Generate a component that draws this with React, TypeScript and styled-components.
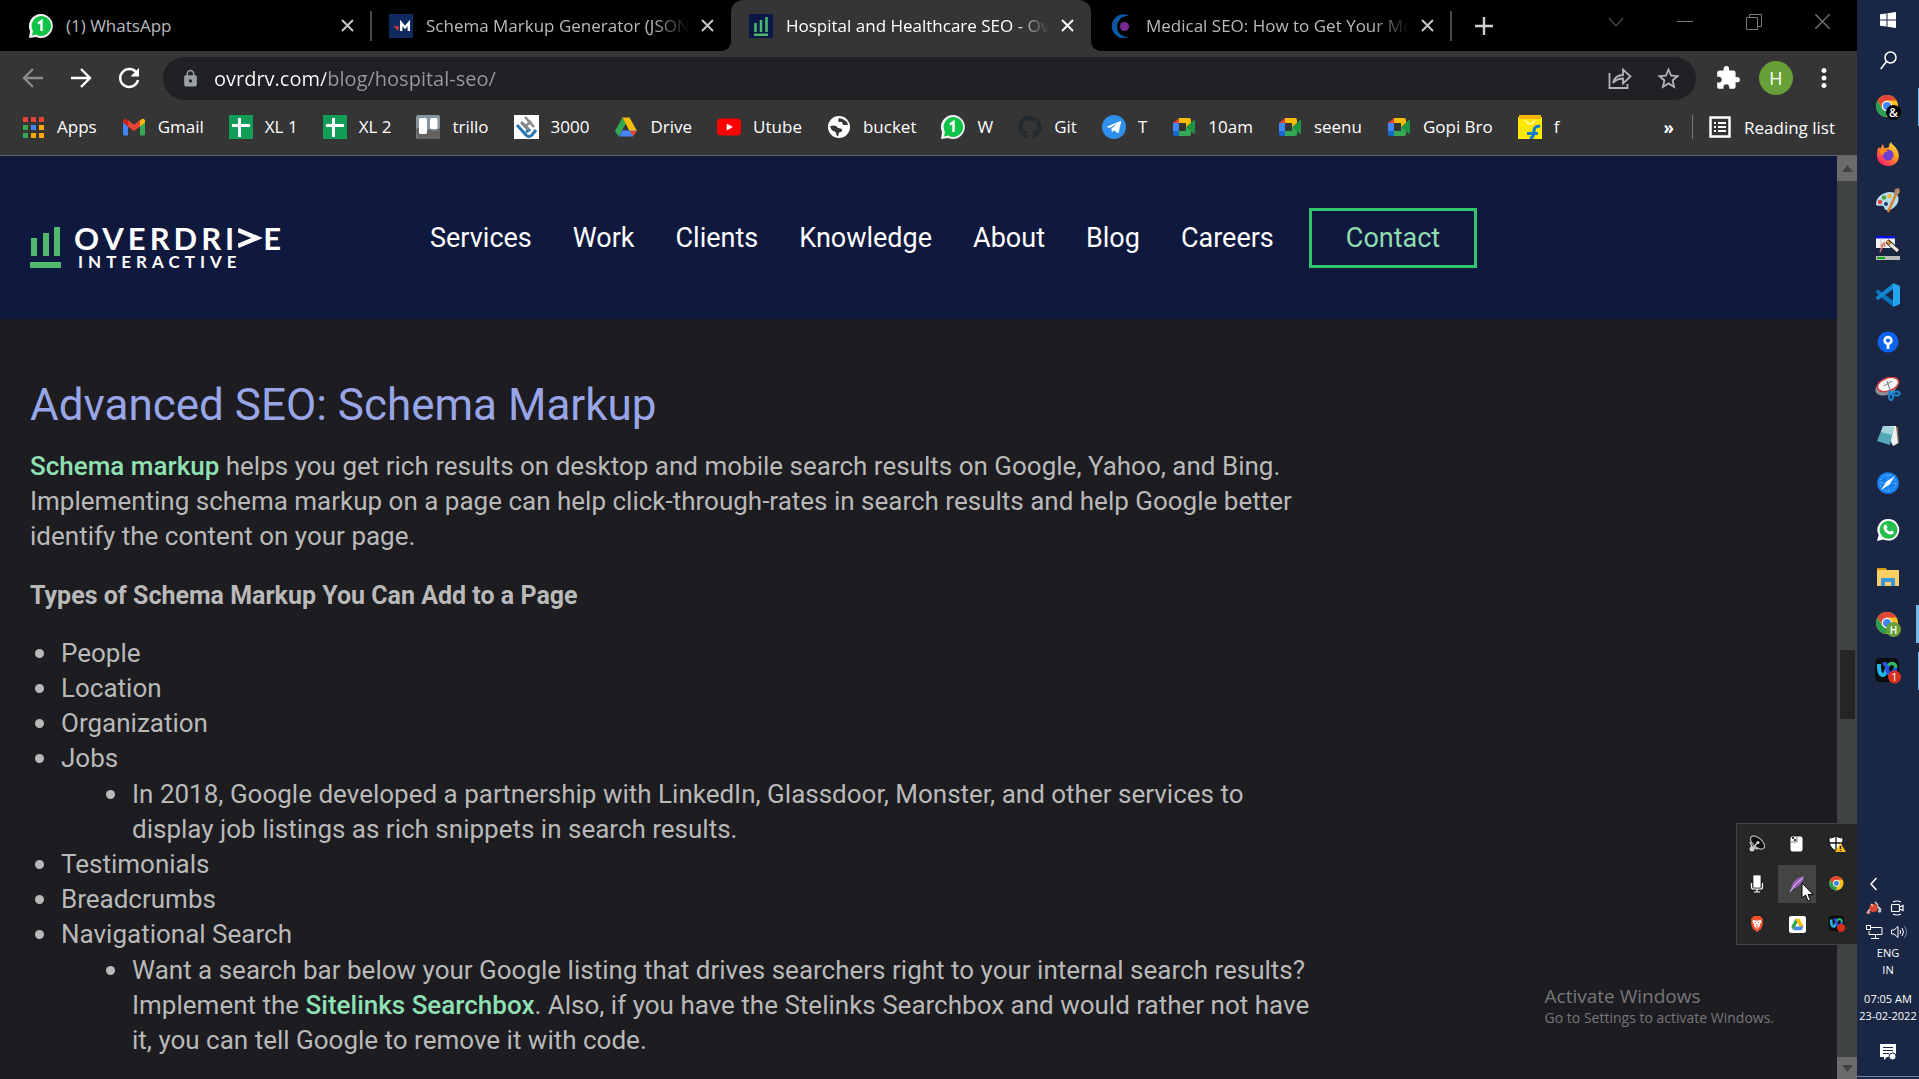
import React from "react";
import styled, { createGlobalStyle, css } from "styled-components";
import { MdLock, MdStarBorder, MdExtension, MdMoreVert } from "react-icons/md";
import { FaGithub } from "react-icons/fa6";

const ui = `"Open Sans", "Noto Sans", sans-serif`;
const site = `Roboto, "Liberation Sans", sans-serif`;

const GlobalStyle = createGlobalStyle`
  * { box-sizing: border-box; }
  body { margin: 0; background: #1d1c21; overflow: hidden; }
  button { background: none; border: 0; padding: 0; margin: 0; color: inherit; font: inherit; cursor: pointer; }
  a { color: inherit; text-decoration: none; }
  svg { display: block; flex: none; }
`;

/* ---------- shell ---------- */

const Desktop = styled.div`
  display: grid;
  grid-template-columns: minmax(0, 1fr) 62px;
  height: 100vh;
  font-family: ${ui};
`;
const Browser = styled.div`
  position: relative;
  display: flex;
  flex-direction: column;
  min-height: 0;
  overflow: hidden;
`;

/* ---------- tab strip ---------- */

const TabStrip = styled.div`
  display: flex;
  height: 51px;
  padding-left: 11px;
  background: #000;
  color: #c4c4c4;
`;
const activeFeet = css`
  &::before {
    content: "";
    position: absolute;
    left: -10px;
    right: -10px;
    bottom: 0;
    height: 10px;
    background:
      radial-gradient(circle at 0 0, transparent 10px, #353535 10px) left / 10px 10px no-repeat,
      radial-gradient(circle at 100% 0, transparent 10px, #353535 10px) right / 10px 10px no-repeat;
  }
`;
const TabItem = styled.div<{ $active?: boolean; $divided?: boolean }>`
  position: relative;
  display: flex;
  align-items: center;
  flex: 0 1 360px;
  min-width: 0;
  height: 51px;
  padding: 0 17px 0 18px;
  border-radius: 12px 12px 0 0;
  background: ${(p) => (p.$active ? "#353535" : "transparent")};
  color: ${(p) => (p.$active ? "#fff" : "#b9babd")};
  ${(p) => p.$active && activeFeet}
  &::after {
    content: "";
    width: 2px;
    height: 30px;
    margin-right: -18px;
    margin-left: 16px;
    background: ${(p) => (p.$divided ? "#4a4a4a" : "transparent")};
  }
`;
const TabButton = styled.button`
  display: flex;
  align-items: center;
  gap: 13px;
  flex: 1;
  min-width: 0;
  text-align: left;
`;
const TabTitle = styled.span<{ $fade?: boolean }>`
  flex: 1;
  overflow: hidden;
  white-space: nowrap;
  font-size: 17px;
  line-height: 26px;
  ${(p) => p.$fade && "mask-image: linear-gradient(to right, #000 calc(100% - 36px), transparent);"}
`;
const TabClose = styled.button`
  display: flex;
  margin-left: 12px;
`;
const NewTab = styled.button`
  display: flex;
  align-items: center;
  margin-left: 24px;
`;
const WindowControls = styled.div`
  display: flex;
  margin-left: auto;
  height: 43px;
  color: #77777a;
`;
const WindowButton = styled.button`
  display: grid;
  place-items: center;
  width: 69px;
  height: 43px;
`;

/* ---------- toolbar ---------- */

const Toolbar = styled.div`
  display: flex;
  align-items: center;
  height: 54px;
  padding: 0 9px 0 9px;
  background: #353535;
  color: #fff;
`;
const ToolButton = styled.button<{ $muted?: boolean }>`
  display: grid;
  place-items: center;
  width: 48px;
  height: 44px;
  color: ${(p) => (p.$muted ? "#8a8b8d" : "#fff")};
`;
const AddressBar = styled.form`
  display: flex;
  align-items: center;
  flex: 1;
  height: 43px;
  margin: 0 8px 0 10px;
  padding: 0 4px 0 18px;
  border-radius: 22px;
  background: #202124;
  color: #9aa0a6;
`;
const AddressInput = styled.input`
  flex: 1;
  min-width: 0;
  height: 32px;
  margin-left: 14px;
  padding: 0;
  border: 0;
  outline: 0;
  font-family: ${ui};
  font-size: 20px;
  background: linear-gradient(to right, #fff 112px, #97999c 112px);
  background-clip: text;
  color: transparent;
`;
const Avatar = styled.span`
  display: grid;
  place-items: center;
  width: 34px;
  height: 34px;
  border-radius: 50%;
  background: #689f38;
  font-size: 18px;
`;

/* ---------- bookmarks ---------- */

const Bookmarks = styled.div`
  display: flex;
  align-items: center;
  height: 51px;
  padding: 0 22px 6px;
  background: #353535;
  border-bottom: 1px solid #606163;
  color: #fff;
  font-size: 17px;
`;
const BookmarkList = styled.nav`
  display: flex;
  gap: 25px;
  flex: 1;
  min-width: 0;
`;
const Bookmark = styled.a`
  display: flex;
  align-items: center;
  gap: 12px;
  line-height: 26px;
  white-space: nowrap;
`;
const Overflow = styled.button`
  padding: 0 18px;
  font-weight: 700;
`;
const ReadingList = styled.button`
  display: flex;
  align-items: center;
  gap: 13px;
  height: 24px;
  padding-left: 16px;
  border-left: 1px solid #77787a;
  white-space: nowrap;
`;

/* ---------- page ---------- */

const Viewport = styled.div`
  display: grid;
  grid-template-columns: minmax(0, 1fr) 20px;
  flex: 1;
  min-height: 0;
`;
const Page = styled.div`
  min-height: 0;
  overflow: hidden;
  background: #1d1c21;
  color: #b9b9b9;
  font-family: ${site};
  font-size: 26px;
  line-height: 35px;
`;
const SiteHeader = styled.header`
  display: flex;
  align-items: center;
  height: 163px;
  padding: 0 30px;
  background: #0f183d;
  color: #fff;
`;
const Logo = styled.a`
  display: flex;
  gap: 13px;
  width: 400px;
  margin-top: 19px;
  font-family: Lato, sans-serif;
`;
const LogoWords = styled.span`
  display: flex;
  flex-direction: column;
`;
const LogoName = styled.span`
  display: flex;
  align-items: center;
  height: 22px;
  margin-bottom: 7px;
  font-size: 31px;
  font-weight: 700;
  letter-spacing: 4px;
  line-height: 22px;
`;
const LogoTag = styled.span`
  padding-left: 4px;
  font-size: 17px;
  font-weight: 700;
  letter-spacing: 5px;
  line-height: 12px;
`;
const SiteNav = styled.nav`
  display: flex;
  align-items: baseline;
  gap: 41px;
  font-size: 27px;
`;
const ContactLink = styled.a`
  margin-left: -6px;
  padding: 10px 34px 9px;
  border: 3px solid #34c46f;
  color: #8fdcb1;
`;
const Article = styled.article`
  max-width: 1354px;
  padding: 58px 30px 0;
`;
const Title = styled.h2`
  margin: 0 0 16px;
  color: #98a5e6;
  font-size: 44px;
  font-weight: 400;
  line-height: 56px;
`;
const Paragraph = styled.p`
  margin: 0 0 24px;
`;
const SubTitle = styled.h3`
  margin: 0 0 23px;
  font-size: 25px;
  font-weight: 700;
  line-height: 35px;
`;
const TextLink = styled.a`
  color: #8fe0b3;
  font-weight: 500;
`;
const List = styled.ul<{ $nested?: boolean }>`
  margin: ${(p) => (p.$nested ? "1px 0 0" : "0")};
  padding: 0 0 0 ${(p) => (p.$nested ? 45 : 5)}px;
  list-style: none;
`;
const Item = styled.li`
  display: grid;
  grid-template-columns: 9px minmax(0, 1fr);
  column-gap: 17px;
  &::before {
    content: "";
    width: 9px;
    height: 9px;
    margin-top: 13px;
    border-radius: 50%;
    background: #b9b9b9;
  }
`;

const Scrollbar = styled.div`
  display: flex;
  flex-direction: column;
  align-items: center;
  background: #3e4344;
`;
const ScrollButton = styled.button<{ $height: number }>`
  display: grid;
  place-items: center;
  width: 20px;
  height: ${(p) => p.$height}px;
  background: #6b6b6b;
`;
const ScrollTrack = styled.div`
  flex: 1;
  padding-top: 469px;
`;
const ScrollThumb = styled.div`
  width: 15px;
  height: 69px;
  background: #252525;
`;

/* ---------- overlays ---------- */

const Watermark = styled.div`
  position: absolute;
  right: 83px;
  bottom: 51px;
  display: flex;
  flex-direction: column;
  color: #77777a;
`;
const WatermarkTitle = styled.strong`
  font-size: 19px;
  font-weight: 400;
  line-height: 24px;
`;
const WatermarkText = styled.span`
  font-size: 14px;
  line-height: 20px;
`;
const TrayPopup = styled.div`
  position: absolute;
  right: 0;
  bottom: 134px;
  display: grid;
  grid-template-columns: repeat(3, 38px);
  gap: 2px;
  padding: 1px 1px 1px 1px;
  border: 1px solid #424242;
  border-right: 0;
  background: #262626;
`;
const TrayCell = styled.button<{ $hover?: boolean }>`
  position: relative;
  display: grid;
  place-items: center;
  height: 38px;
  background: ${(p) => (p.$hover ? "#444" : "transparent")};
`;
const Cursor = styled.svg`
  position: absolute;
  left: 23px;
  top: 17px;
  z-index: 2;
`;

/* ---------- taskbar ---------- */

const Taskbar = styled.aside`
  display: flex;
  flex-direction: column;
  background: #1a2744;
  color: #fff;
`;
const TaskGroup = styled.div`
  display: flex;
  flex-direction: column;
  margin-bottom: 3px;
`;
const TaskButton = styled.button<{ $mark?: number; $short?: boolean }>`
  display: grid;
  place-items: center;
  height: ${(p) => (p.$short ? 40 : 47)}px;
  background: linear-gradient(#76b9ed, #76b9ed) right center / ${(p) => p.$mark || 0}px 38px no-repeat;
`;
const SystemTray = styled.div`
  display: flex;
  flex-direction: column;
  border-bottom: 1px solid #76839a;
  margin-top: auto;
  margin-bottom: 2px;
  text-align: center;
  font-size: 11px;
`;
const TrayRow = styled.div`
  display: flex;
  align-items: center;
  gap: 8px;
  height: 24px;
  padding-left: 9px;
`;
const TrayText = styled.button`
  line-height: 17px;
  margin-bottom: 12px;
  white-space: pre-line;
`;
const NoticeButton = styled.button`
  display: grid;
  place-items: center;
  height: 40px;
  padding-bottom: 8px;
`;

/* ---------- icons ---------- */

const X = ({ size = 13, width = 2, color = "#dcdcdc" }) => (
  <svg width={size} height={size} viewBox="0 0 13 13" fill="none" stroke={color} strokeWidth={width}>
    <path d="M1 1l11 11M12 1L1 12" />
  </svg>
);
const WhatsOne = () => (
  <svg width="24" height="24" viewBox="0 0 24 24">
    <path d="M12 0a12 12 0 1 1-5 23L0 24l1-7A12 12 0 0 1 12 0z" fill="#f2f2f2" />
    <path d="M12 2a10 10 0 1 1-5 18.600L3 21.500l1-4.500A10 10 0 0 1 12 2z" fill="#10c247" />
    <path d="M9 9.500L12.500 7v10" fill="none" stroke="#fff" strokeWidth="2.400" />
  </svg>
);
const MerkleIcon = () => (
  <svg width="24" height="24" viewBox="0 0 24 24">
    <path d="M0 0h24v24H0z" fill="#10295e" />
    <path d="M4.500 12l5 .5v4.500z" fill="#e5412d" />
    <path d="M12.200 17V9l3.800 4.500L19.800 9v8" fill="none" stroke="#fff" strokeWidth="2.400" />
  </svg>
);
const BarsIcon = () => (
  <svg width="24" height="24" viewBox="0 0 24 24">
    <path d="M0 0h24v24H0z" fill="#0a1747" />
    <path d="M6.500 9v9M12 6v12M17.500 3v15M5 20.700h14" stroke="#4cb86c" strokeWidth="2.600" />
  </svg>
);
const CrescentIcon = () => (
  <svg width="24" height="24" viewBox="0 0 24 24">
    <path d="M20 1.500A12 12 0 1 0 20 23C4 23 4 2.500 20 1.500z" fill="#0b57a4" />
    <circle cx="15.500" cy="12.500" r="4.600" fill="#782a94" />
  </svg>
);
const AppsIcon = () => (
  <svg width="23" height="23" viewBox="0 0 23 23">
    {["#ea4335", "#ea4335", "#ea4335", "#34a853", "#4285f4", "#fbab04", "#34a853", "#fbab04", "#fbab04"].map((c, i) => (
      <rect key={i} x={1 + (i % 3) * 8} y={1 + Math.floor(i / 3) * 8} width="5" height="5" fill={c} />
    ))}
  </svg>
);
const GmailIcon = () => (
  <svg width="24" height="24" viewBox="0 0 24 24">
    <path d="M1 7v12.500q0 1 1 1h4V11z" fill="#4285f4" />
    <path d="M23 7v12.500q0 1-1 1h-4V11z" fill="#34a853" />
    <path d="M18 6v5.500l5-4V6c0-2-2-3-3.700-1.800z" fill="#fbbc04" />
    <path d="M1 6v1.500l5 4V6L4.700 4.200C3 3 1 4 1 6z" fill="#c5221f" />
    <path d="M6 5v6.500l6 4.500 6-4.500V5l-6 4.700z" fill="#ea4335" />
  </svg>
);
const SheetIcon = () => (
  <svg width="24" height="24" viewBox="0 0 24 24">
    <path d="M0 0h24v24H0z" fill="#0f9d58" />
    <path d="M10.500 3v19M3 10.500h18" stroke="#fff" strokeWidth="3" />
  </svg>
);
const TrelloIcon = () => (
  <svg width="24" height="24" viewBox="0 0 24 24">
    <rect width="24" height="24" rx="2" fill="#8797a1" />
    <path d="M0 14l5-3 4 6 4-3 6 2 5-3v9l-1 2H1z" fill="#65625f" />
    <rect x="3" y="3" width="8" height="16" rx="1.500" fill="#fff" />
    <rect x="14" y="3" width="7.500" height="11" rx="1.500" fill="#fff" />
  </svg>
);
const HookIcon = () => (
  <svg width="25" height="24" viewBox="0 0 25 24">
    <path d="M0 0h25v24H0z" fill="#fff" />
    <path d="M3 10l9 10q3 3 6 0l4-5M8 8l7 7-3 2" fill="none" stroke="#2874ae" strokeWidth="3" />
    <path d="M7 7l8 8M11 2l9 10M12 11l5-5" fill="none" stroke="#888" strokeWidth="2.600" />
  </svg>
);
const DriveIcon = () => (
  <svg width="24" height="24" viewBox="0 0 24 24">
    <path d="M8.500 2.500L1 16l3.500 5.500L12 8.500z" fill="#34a853" />
    <path d="M8.500 2.500h7L23 16h-7.500z" fill="#fbbc04" />
    <path d="M5 21.500l3-6h14.500l-3.500 6z" fill="#4285f4" />
    <path d="M16 16h7l-4 5.500z" fill="#ea4335" />
  </svg>
);
const TubeIcon = () => (
  <svg width="24" height="24" viewBox="0 0 24 24">
    <rect y="3.500" width="24" height="17" rx="4" fill="#f00" />
    <path d="M9.700 8.500l6.200 3.500-6.200 3.500z" fill="#fff" />
  </svg>
);
const GlobeIcon = () => (
  <svg width="24" height="24" viewBox="0 0 24 24">
    <circle cx="12" cy="12" r="11" fill="#fff" />
    <path d="M3 11l4-.5q3 0 4 2.500l3 .5q2 1 1 3l-3 1-1 4q-2-1-2-3t-3-2.500Q4 15 3 11zM12.500 3q-2.500 2-.5 4h3l1 3h4.500q1 1 .5 3 1-8-8.500-10z" fill="#35363a" />
  </svg>
);
const TelegramIcon = () => (
  <svg width="24" height="24" viewBox="0 0 24 24">
    <circle cx="12" cy="12" r="12" fill="#2f8fec" />
    <path d="M4.500 11.700L18.500 6q.8 0 .6 1L16.700 17.500q-.3 1-1.200.4L12 15.300l-2 2-.7-3.500 6.200-5.600-7.800 4.900z" fill="#fff" />
  </svg>
);
const MeetIcon = () => (
  <svg width="24" height="24" viewBox="0 0 24 24">
    <path d="M1 8l6-5v5z" fill="#ea4335" />
    <path d="M1 8h6v8H1z" fill="#4285f4" />
    <path d="M1 16h6v5H3q-2 0-2-2z" fill="#1967d2" />
    <path d="M7 3h10q2 0 2 2v5l-5 3V8H7z" fill="#fbbc04" />
    <path d="M7 16h7v-4l5 3v4q0 2-2 2H7z" fill="#34a853" />
    <path d="M14 12l8-7q1 0 1 1v12q0 1-1 1z" fill="#1e9443" />
  </svg>
);
const FlipIcon = () => (
  <svg width="24" height="24" viewBox="0 0 24 24">
    <path d="M0 2h24v22H0z" fill="#ffe800" />
    <path d="M1 0h22v4H1z" fill="#f4b400" />
    <path d="M7 5q5 8 10 0" fill="none" stroke="#fff3a0" strokeWidth="1.500" />
    <path d="M22 11.500c-5-1-6 2-6 5s-1 6-4 7M9 18.500h11" fill="none" stroke="#0f7bd1" strokeWidth="3" />
  </svg>
);
const ListIcon = () => (
  <svg width="22" height="22" viewBox="0 0 22 22" fill="none" stroke="#fff">
    <rect x="1.500" y="1.500" width="19" height="19" strokeWidth="2.500" />
    <path d="M5 7h2m2 0h8M5 11h2m2 0h8M5 15h2m2 0h8" strokeWidth="2" />
  </svg>
);
const Arrow = ({ back = false }) => (
  <svg width="24" height="24" viewBox="0 0 24 24" fill="none" stroke="currentColor" strokeWidth="2.400">
    {back ? <path d="M22 12H3m9-9l-9 9 9 9" /> : <path d="M2 12h19m-9-9l9 9-9 9" />}
  </svg>
);
const Reload = () => (
  <svg width="24" height="24" viewBox="0 0 24 24">
    <path d="M20 7.500A9 9 0 1 0 21 14" fill="none" stroke="#fff" strokeWidth="2.500" />
    <path d="M22 2v8.500h-8.500z" fill="#fff" />
  </svg>
);
const Share = () => (
  <svg width="24" height="24" viewBox="0 0 24 24" fill="none" stroke="#b4b5b7" strokeWidth="1.800">
    <path d="M1.500 7v15h18v-4" />
    <path d="M5 17q2-8 10-8V3.500l7.500 7-7.500 7V12.500q-6 0-10 4.500z" />
  </svg>
);
const ChromeIcon = ({ size = 24, badge = "" }) => (
  <svg width={size + 4} height={size + 4} viewBox="-2 -2 28 28">
    <circle cx="11" cy="11" r="11" fill="#fbc116" />
    <path d="M1.500 5.500A11 11 0 0 1 20.500 5.500H11a5.500 5.500 0 0 0-5 7z" fill="#e2463a" />
    <path d="M1.500 5.500l5 8.500q2 3 6 2.500L10 22A11 11 0 0 1 1.500 5.500z" fill="#269d52" />
    <circle cx="11" cy="11" r="5.200" fill="#fff" />
    <circle cx="11" cy="11" r="4" fill="#4285f4" />
    {badge && <circle cx="17.500" cy="17.500" r="7.500" fill={badge === "H" ? "#689f38" : "#000"} />}
    {badge && (
      <text x="17.500" y="21.500" textAnchor="middle" fontSize={badge === "H" ? 10 : 12} fontWeight="600" fill="#fff" fontFamily="Open Sans, sans-serif">
        {badge}
      </text>
    )}
  </svg>
);
const FirefoxIcon = () => (
  <svg width="24" height="24" viewBox="0 0 24 24">
    <defs>
      <linearGradient id="fox" x1="1" y1="0" x2=".2" y2="1">
        <stop offset="0" stopColor="#fff14f" />
        <stop offset=".45" stopColor="#ff9a1f" />
        <stop offset="1" stopColor="#f5156c" />
      </linearGradient>
    </defs>
    <path d="M15 0c1 3 3 3 5 6 6 8 2 18-8 18C4 24 0 18 1 11c0-3 1-5 2-6l1 2 3-5 1 4c3 0 5 0 5-2 0-1 1-3 2-4z" fill="url(#fox)" />
    <circle cx="12" cy="13" r="5.500" fill="#6f3fd3" />
    <path d="M3 8c4-2 7-1 9 2-3-1-5 1-4 3-3 0-4-2-5-5z" fill="#ff8a16" />
  </svg>
);
const PaintIcon = () => (
  <svg width="26" height="26" viewBox="0 0 26 26">
    <path d="M1 16C1 9 8 4 15 4s10 5 8 10-7 9-12 8c-2 0-1-3-3-4s-7 1-7-2z" fill="#b9dcec" />
    <circle cx="5" cy="14" r="2.200" fill="#e04438" />
    <circle cx="9" cy="9.500" r="2.200" fill="#4fa83e" />
    <circle cx="14.500" cy="8" r="2.200" fill="#f1b530" />
    <circle cx="11" cy="16" r="2" fill="#1a3f66" />
    <path d="M22 4l-9 20" stroke="#d9822b" strokeWidth="2.500" />
    <path d="M20 1l4-1 1 4-3 4-3-1z" fill="#b68a60" />
  </svg>
);
const WandIcon = () => (
  <svg width="26" height="26" viewBox="0 0 26 26">
    <path d="M1 1h19v12H1z" fill="#f4f4f4" />
    <path d="M1 1h19v2.500H1z" fill="#0d10e6" />
    <path d="M6 3v10" stroke="#bbb" />
    <path d="M12 6l12 11" stroke="#222" strokeWidth="5" />
    <path d="M15 9l8 7" stroke="#f1e9e0" strokeWidth="3" />
    <path d="M12 6l3 3" stroke="#d8952c" strokeWidth="3" />
    <path d="M5 17l4-9M6 11l3-3 1 4" fill="none" stroke="#e57373" strokeWidth="1.500" />
    <path d="M1 21h24v4H1z" fill="#bbb" />
    <path d="M2 22h8v2H2z" fill="#15a815" />
  </svg>
);
const CodeIcon = () => (
  <svg width="24" height="24" viewBox="0 0 24 24">
    <path d="M0 8l2-1.500L17.500 18v6L0 10z" fill="#0a74bf" />
    <path d="M0 15.500l2 1.500L17.500 6V0L0 14z" fill="#1186cf" />
    <path d="M17 0l7 3v18l-7 3z" fill="#25a4f0" />
  </svg>
);
const KeyIcon = () => (
  <svg width="22" height="22" viewBox="0 0 22 22">
    <circle cx="11" cy="11" r="10.500" fill="#0b63f0" />
    <circle cx="11" cy="9.500" r="3.400" fill="none" stroke="#fff" strokeWidth="2.600" />
    <path d="M11 13v5" stroke="#fff" strokeWidth="2.800" />
  </svg>
);
const SnipIcon = () => (
  <svg width="26" height="24" viewBox="0 0 26 24">
    <ellipse cx="11" cy="11" rx="11" ry="7" transform="rotate(-20 11 11)" fill="#8b9199" />
    <ellipse cx="13" cy="7.500" rx="11" ry="6.500" transform="rotate(-20 13 7.500)" fill="#f6f6f6" stroke="#d83b3b" strokeWidth="1.600" />
    <path d="M9 9l8-5M12 4l3 9" stroke="#777" />
    <g fill="none" stroke="#1f86d2" strokeWidth="1.800">
      <ellipse cx="16" cy="20" rx="2" ry="3" />
      <ellipse cx="21.500" cy="16.500" rx="3.200" ry="2" />
      <path d="M15 17l-2-3M19 16l-5-2" />
    </g>
  </svg>
);
const NotepadIcon = () => (
  <svg width="24" height="24" viewBox="0 0 24 24">
    <path d="M8 2l14 1 1 16-5 3z" fill="#7d6a44" />
    <path d="M8 2h12l2 17-5 3z" fill="#eef3f4" />
    <path d="M7 2l11 1-4 18L1 17z" fill="#54a9b8" />
    <path d="M7 2l11 1-2 8-11-3z" fill="#a5d3da" />
  </svg>
);
const CompassIcon = () => (
  <svg width="22" height="22" viewBox="0 0 22 22">
    <circle cx="11" cy="11" r="10.800" fill="#1481f0" />
    <circle cx="11" cy="11" r="8" fill="none" stroke="#79b8f6" strokeDasharray="2 1.500" />
    <path d="M11 2v18M2 11h18" stroke="#59a4f2" strokeWidth=".8" />
    <path d="M18 4l-5.500 8.500L4 18l5.500-8.500z" fill="#fff" />
  </svg>
);
const WhatsIcon = () => (
  <svg width="24" height="24" viewBox="0 0 24 24">
    <path d="M12.500 1a10.800 10.800 0 1 1-5 20.400L1 23l1.700-6A10.800 10.800 0 0 1 12.500 1z" fill="#fff" />
    <circle cx="12.500" cy="11.800" r="9" fill="#27bf4b" />
    <path d="M8.500 7l1.800-.5 1.200 3-1 1.200q1 2 3.300 3l1.200-1.200 2.800 1.300q0 2.700-3 2.700Q8 15.500 7.500 9.500q0-1.500 1-2.500z" fill="#fff" />
  </svg>
);
const FolderIcon = () => (
  <svg width="22" height="20" viewBox="0 0 22 20">
    <path d="M0 1h9l1.500 3H0z" fill="#d99a11" />
    <path d="M0 3h22v16H0z" fill="#fbd166" />
    <path d="M4 19v-8h14v8h-4v-4H8v4z" fill="#3a96dd" />
  </svg>
);
const WebexIcon = ({ size = 24, count = "" }) => (
  <svg width={size + 4} height={size + 4} viewBox="-2 -2 28 28">
    <rect x="-1" y="-1" width="24" height="24" rx="5" fill="#0c0d0f" />
    <path d="M3 5q-.5 11 4 11c3 0 3.500-6 4.500-9" fill="none" stroke="#20b8e8" strokeWidth="4" />
    <path d="M7 5.500c4-2 4 2.500 4.500 6.500 1 4 6 4 8-3" fill="none" stroke="#2a52e8" strokeWidth="4" />
    <path d="M12.500 7q1.500-4 5.500-2 2 1 1.500 4" fill="none" stroke="#2fb869" strokeWidth="3.400" />
    <circle cx="18.500" cy="18" r="6.500" fill="#d5301c" />
    {count && (
      <text x="18.500" y="22" textAnchor="middle" fontSize="11" fill="#fff" fontFamily="Open Sans, sans-serif">
        {count}
      </text>
    )}
  </svg>
);
const WindowsIcon = () => (
  <svg width="16" height="16" viewBox="0 0 16 16" fill="#fff">
    <path d="M0 2.300L6.500 1.400V7.500H0zM7.500 1.200L16 0v7.500H7.500zM0 8.500h6.500v6L0 13.700zM7.500 8.500H16V16l-8.500-1.200z" />
  </svg>
);
const SearchIcon = () => (
  <svg width="17" height="19" viewBox="0 0 17 19" fill="none" stroke="#fff" strokeWidth="1.500">
    <circle cx="10.500" cy="6.500" r="5.500" />
    <path d="M6.500 10.500L.7 18" />
  </svg>
);

/* tray glyphs */
const Dish = () => (
  <svg width="18" height="18" viewBox="0 0 18 18">
    <ellipse cx="9.500" cy="7.500" rx="8.500" ry="4.500" transform="rotate(42 9.500 7.500)" fill="#0c0c0c" stroke="#b5b5b5" strokeWidth="1.200" />
    <circle cx="10" cy="7.500" r="1.500" fill="#ddd" />
    <path d="M2 7l2 5 6 2M10 7L5 13" fill="none" stroke="#ccc" strokeWidth="1.400" />
    <circle cx="4" cy="14" r="2.500" fill="#d0d0d0" />
  </svg>
);
const Touchpad = () => (
  <svg width="14" height="16" viewBox="0 0 14 16">
    <rect x=".5" y=".5" width="12" height="15" rx="2" fill="#fff" />
    <path d="M1 6h6V1" fill="none" stroke="#777" />
    <path d="M2 1h2v2H2zM4 3h2v2H4z" fill="#333" />
  </svg>
);
const Shield = () => (
  <svg width="18" height="18" viewBox="0 0 18 18">
    <path d="M8 1q3 2 7 2c0 6-1 10-7 13C2 13 1 9 1 3q4 0 7-2z" fill="#fff" stroke="#111" />
    <path d="M8 1v15M1 8h14" stroke="#111" strokeWidth="1.300" />
    <path d="M12.500 8L18 17H7z" fill="#f6b915" />
    <path d="M12.500 11v3m0 1v1" stroke="#222" strokeWidth="1.300" />
  </svg>
);
const Mic = () => (
  <svg width="14" height="18" viewBox="0 0 14 18" fill="none" stroke="#fff" strokeWidth="1.200">
    <rect x="4" y="1" width="6" height="11" fill="#fff" />
    <path d="M1.500 8v4q0 2 2 2h7q2 0 2-2V8M7 14v3M4 17h6" />
  </svg>
);
const Feather = () => (
  <svg width="16" height="18" viewBox="0 0 16 18">
    <path d="M15 1Q6 3 3 10l-2 6 5-3Q14 9 15 1z" fill="#9b62bd" />
    <path d="M1 17Q6 8 14 3" fill="none" stroke="#e3c8f2" />
  </svg>
);
const Brave = () => (
  <svg width="14" height="16" viewBox="0 0 14 16">
    <path d="M4 0h6l3 3-.5 3 .5 2-2 5-4 3-4-3L1 8l.500-2L1 3z" fill="#f4502a" />
    <path d="M3 4l4 .8L11 4l.5 2-2 3 .5 1-3 3-3-3 .5-1-2-3z" fill="#fff" />
    <path d="M5 6l1 1m3-1L8 7M7 8v2m-1 1h2" stroke="#f4502a" />
  </svg>
);
const DriveBox = () => (
  <svg width="17" height="17" viewBox="-3 -3 30 30">
    <rect x="-3" y="-3" width="30" height="30" rx="4" fill="#fff" />
    <path d="M8.500 2L1 16l3.500 6L12 8.500z" fill="#34a853" />
    <path d="M8.500 2h7L23 16h-7.500z" fill="#fbbc04" />
    <path d="M5 22l3-6.500h14.500L19 22z" fill="#4285f4" />
  </svg>
);

const bookmarks: [React.ReactNode, string][] = [
  [<AppsIcon />, "Apps"],
  [<GmailIcon />, "Gmail"],
  [<SheetIcon />, "XL 1"],
  [<SheetIcon />, "XL 2"],
  [<TrelloIcon />, "trillo"],
  [<HookIcon />, "3000"],
  [<DriveIcon />, "Drive"],
  [<TubeIcon />, "Utube"],
  [<GlobeIcon />, "bucket"],
  [<WhatsOne />, "W"],
  [<FaGithub size={24} color="#24292e" />, "Git"],
  [<TelegramIcon />, "T"],
  [<MeetIcon />, "10am"],
  [<MeetIcon />, "seenu"],
  [<MeetIcon />, "Gopi Bro"],
  [<FlipIcon />, "f"],
];

const tabs = [
  { icon: <WhatsOne />, title: "(1) WhatsApp", divided: true },
  { icon: <MerkleIcon />, title: "Schema Markup Generator (JSON-LD)", fade: true },
  { icon: <BarsIcon />, title: "Hospital and Healthcare SEO - Overdrive", fade: true, active: true },
  { icon: <CrescentIcon />, title: "Medical SEO: How to Get Your Medical", fade: true, divided: true },
];

const apps: [string, React.ReactNode, number?][] = [
  ["Chrome, work profile", <ChromeIcon badge="&" />, 1],
  ["Firefox", <FirefoxIcon />],
  ["Paint", <PaintIcon />],
  ["Window tool", <WandIcon />],
  ["Visual Studio Code", <CodeIcon />],
  ["Password manager", <KeyIcon />],
  ["Snipping Tool", <SnipIcon />],
  ["Notepad", <NotepadIcon />],
  ["Safari", <CompassIcon />],
  ["WhatsApp", <WhatsIcon />],
  ["File Explorer", <FolderIcon />],
  ["Chrome", <ChromeIcon badge="H" />, 3],
  ["Webex", <WebexIcon count="1" />, 1],
];

const tray: [string, React.ReactNode][] = [
  ["Audio", <Dish />],
  ["Touchpad", <Touchpad />],
  ["Security", <Shield />],
  ["Microphone", <Mic />],
  ["Feather", <Feather />],
  ["Chrome", <ChromeIcon size={14} />],
  ["Brave", <Brave />],
  ["Drive", <DriveBox />],
  ["Webex", <WebexIcon size={14} />],
];

const links = ["Services", "Work", "Clients", "Knowledge", "About", "Blog", "Careers"];

const Bullet = ({ children, sub }: { children: React.ReactNode; sub?: React.ReactNode }) => (
  <Item>
    <div>
      {children}
      {sub && (
        <List $nested>
          <Bullet>{sub}</Bullet>
        </List>
      )}
    </div>
  </Item>
);

export default function App() {
  return (
    <>
      <GlobalStyle />
      <Desktop>
        <Browser>
          <TabStrip>
            {tabs.map((t) => (
              <TabItem key={t.title} $active={t.active} $divided={t.divided}>
                <TabButton>
                  {t.icon}
                  <TabTitle $fade={t.fade}>{t.title}</TabTitle>
                </TabButton>
                <TabClose aria-label="Close tab">
                  <X color={t.active ? "#fff" : "#c8c8c8"} />
                </TabClose>
              </TabItem>
            ))}
            <NewTab aria-label="New tab">
              <svg width="18" height="18" viewBox="0 0 18 18" stroke="#d0d0d0" strokeWidth="2.400">
                <path d="M9 0v18M0 9h18" />
              </svg>
            </NewTab>
            <WindowControls>
              <WindowButton aria-label="Search tabs">
                <svg width="16" height="10" viewBox="0 0 16 10" fill="none" stroke="currentColor">
                  <path d="M1 1l7 8 7-8" />
                </svg>
              </WindowButton>
              <WindowButton aria-label="Minimize">
                <svg width="16" height="2" stroke="currentColor">
                  <path d="M0 .5h16" />
                </svg>
              </WindowButton>
              <WindowButton aria-label="Restore">
                <svg width="16" height="16" viewBox="0 0 16 16" fill="none" stroke="currentColor">
                  <path d="M.5 3.500h11v12H.5zM3.500 3V.5h12v12H12" />
                </svg>
              </WindowButton>
              <WindowButton aria-label="Close window">
                <X size={17} width={1} color="#77777a" />
              </WindowButton>
            </WindowControls>
          </TabStrip>

          <Toolbar>
            <ToolButton aria-label="Back" $muted><Arrow back /></ToolButton>
            <ToolButton aria-label="Forward"><Arrow /></ToolButton>
            <ToolButton aria-label="Reload"><Reload /></ToolButton>
            <AddressBar onSubmit={(e) => e.preventDefault()}>
              <MdLock size={19} />
              <AddressInput aria-label="Address" defaultValue="ovrdrv.com/blog/hospital-seo/" />
              <ToolButton type="button" aria-label="Share"><Share /></ToolButton>
              <ToolButton type="button" aria-label="Bookmark this page"><MdStarBorder size={27} color="#b4b5b7" /></ToolButton>
            </AddressBar>
            <ToolButton aria-label="Extensions"><MdExtension size={26} /></ToolButton>
            <ToolButton aria-label="Profile"><Avatar>H</Avatar></ToolButton>
            <ToolButton aria-label="Menu"><MdMoreVert size={30} /></ToolButton>
          </Toolbar>

          <Bookmarks>
            <BookmarkList>
              {bookmarks.map(([icon, name]) => (
                <Bookmark href="#" key={name}>
                  {icon}
                  {name}
                </Bookmark>
              ))}
            </BookmarkList>
            <Overflow aria-label="More bookmarks">»</Overflow>
            <ReadingList>
              <ListIcon />
              Reading list
            </ReadingList>
          </Bookmarks>

          <Viewport>
            <Page>
              <SiteHeader>
                <Logo href="#" aria-label="Overdrive Interactive">
                  <svg width="31" height="41" viewBox="0 0 31 41" fill="#51b86e">
                    <path d="M1 11h6v18H1zM13 6h6v23h-6zM24 0h6v29h-6zM0 35h31v6H0z" />
                  </svg>
                  <LogoWords>
                    <LogoName>
                      OVERDRI
                      <svg width="25" height="22" viewBox="0 0 25 22" fill="none" stroke="#fff" strokeWidth="4.500">
                        <path d="M0 3l19 8-19 8" />
                      </svg>
                      E
                    </LogoName>
                    <LogoTag>INTERACTIVE</LogoTag>
                  </LogoWords>
                </Logo>
                <SiteNav>
                  {links.map((l) => (
                    <a href="#" key={l}>{l}</a>
                  ))}
                  <ContactLink href="#">Contact</ContactLink>
                </SiteNav>
              </SiteHeader>
              <Article>
                <Title>Advanced SEO: Schema Markup</Title>
                <Paragraph>
                  <TextLink href="#">Schema markup</TextLink> helps you get rich results on desktop and mobile search
                  results on Google, Yahoo, and Bing. Implementing schema markup on a page can help click-through-rates
                  in search results and help Google better identify the content on your page.
                </Paragraph>
                <SubTitle>Types of Schema Markup You Can Add to a Page</SubTitle>
                <List>
                  <Bullet>People</Bullet>
                  <Bullet>Location</Bullet>
                  <Bullet>Organization</Bullet>
                  <Bullet
                    sub="In 2018, Google developed a partnership with LinkedIn, Glassdoor, Monster, and other services to display job listings as rich snippets in search results."
                  >
                    Jobs
                  </Bullet>
                  <Bullet>Testimonials</Bullet>
                  <Bullet>Breadcrumbs</Bullet>
                  <Bullet
                    sub={
                      <>
                        Want a search bar below your Google listing that drives searchers right to your internal search
                        results? Implement the <TextLink href="#">Sitelinks Searchbox</TextLink>. Also, if you have the
                        Stelinks Searchbox and would rather not have it, you can tell Google to remove it with code.
                      </>
                    }
                  >
                    Navigational Search
                  </Bullet>
                </List>
              </Article>
            </Page>
            <Scrollbar>
              <ScrollButton $height={25} aria-label="Scroll up">
                <svg width="11" height="7" fill="#3e4344"><path d="M0 7l5.500-7L11 7z" /></svg>
              </ScrollButton>
              <ScrollTrack><ScrollThumb /></ScrollTrack>
              <ScrollButton $height={22} aria-label="Scroll down">
                <svg width="11" height="7" fill="#3e4344"><path d="M0 0l5.500 7L11 0z" /></svg>
              </ScrollButton>
            </Scrollbar>
          </Viewport>

          <Watermark>
            <WatermarkTitle>Activate Windows</WatermarkTitle>
            <WatermarkText>Go to Settings to activate Windows.</WatermarkText>
          </Watermark>
          <TrayPopup>
            {tray.map(([name, icon]) => (
              <TrayCell key={name} aria-label={name} $hover={name === "Feather"}>
                {icon}
                {name === "Feather" && (
                  <Cursor width="13" height="20" viewBox="0 0 13 20">
                    <path d="M1 1v15l3.500-3 2.500 6 2.500-1-2.500-5.500H12z" fill="#fff" stroke="#000" />
                  </Cursor>
                )}
              </TrayCell>
            ))}
          </TrayPopup>
        </Browser>

        <Taskbar>
          <TaskGroup>
            <TaskButton $short aria-label="Start"><WindowsIcon /></TaskButton>
            <TaskButton $short aria-label="Search"><SearchIcon /></TaskButton>
          </TaskGroup>
          <TaskGroup>
            {apps.map(([name, icon, mark]) => (
              <TaskButton key={name} aria-label={name} $mark={mark}>{icon}</TaskButton>
            ))}
          </TaskGroup>
          <SystemTray>
            <TrayRow>
              <button aria-label="Hidden icons">
                <svg width="16" height="14" viewBox="0 0 16 14" fill="none" stroke="#fff" strokeWidth="1.500">
                  <path d="M10.500 1L5 7l5.500 6" />
                </svg>
              </button>
            </TrayRow>
            <TrayRow>
              <svg width="16" height="14" viewBox="0 0 16 14">
                <path d="M1 12l4-5M11 5l4 4" stroke="#ccc" strokeWidth="2" />
                <circle cx="7.500" cy="7" r="4" fill="#dd4a34" />
                <path d="M9 1l3 3M5 3l2 2" stroke="#e8c8bf" strokeWidth="1.500" />
                <circle cx="2.500" cy="11.500" r="1.800" fill="#d88" />
                <circle cx="13.500" cy="10" r="1.800" fill="#bbb" />
              </svg>
              <svg width="15" height="16" viewBox="0 0 15 16" fill="none" stroke="#fff" strokeWidth="1.200">
                <rect x="1.500" y="4.500" width="8" height="7" rx="1" />
                <path d="M9.500 7l3.500-1.500v5L9.500 9M3 2q4-2 8 0M3 14q4 2 8 0" />
              </svg>
            </TrayRow>
            <TrayRow>
              <svg width="17" height="14" viewBox="0 0 17 14" fill="none" stroke="#fff">
                <path d="M5 2.500h11v7H3V6M9.500 10v3M5 13.500h8" />
                <rect x=".5" y=".5" width="4" height="4" />
              </svg>
              <svg width="17" height="14" viewBox="0 0 17 14" fill="none" stroke="#fff">
                <path d="M.5 5v4H3l4 3.500V1.500L3 5zM9 5q1.500 2 0 4M11 3q3 4 0 8" />
                <path d="M13.500 1q4 6 0 12" stroke="#75809a" />
              </svg>
            </TrayRow>
            <TrayText>{"ENG\nIN"}</TrayText>
            <TrayText>{"07:05 AM\n23-02-2022"}</TrayText>
            <NoticeButton aria-label="Notifications">
              <svg width="17" height="17" viewBox="0 0 17 17">
                <path d="M0 0h16v13H7l-3 3v-3H0z" fill="#fff" />
                <path d="M3 3.500h10M3 6.500h10M3 9.500h6" stroke="#1a2744" />
                <circle cx="12.500" cy="12.500" r="3.500" fill="#fff" stroke="#1a2744" />
              </svg>
            </NoticeButton>
          </SystemTray>
        </Taskbar>
      </Desktop>
    </>
  );
}
